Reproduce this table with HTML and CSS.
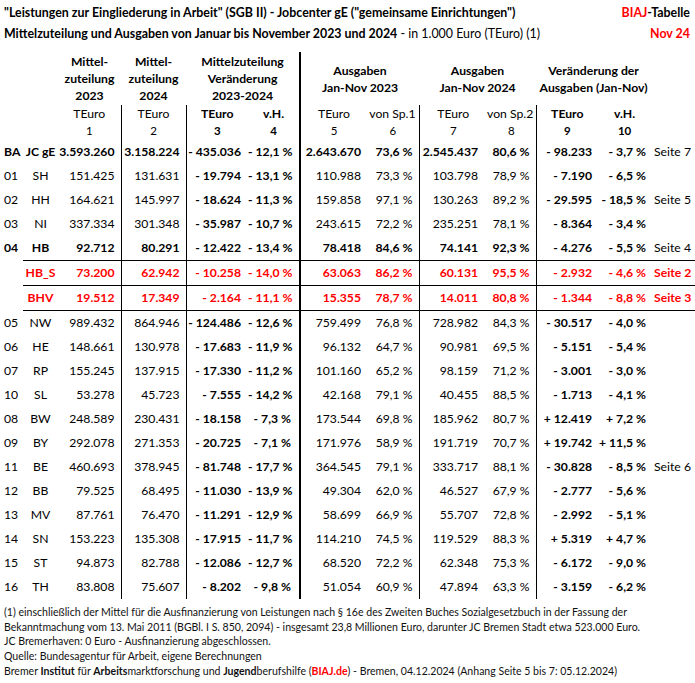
FILE: index.html
```html
<!DOCTYPE html>
<html lang="de">
<head>
<meta charset="utf-8">
<title>BIAJ-Tabelle</title>
<link rel="stylesheet" href="styles.css">
</head>
<body>
<div class="page">
  <div class="titles">
    <div class="tline">
      <span class="b">"Leistungen zur Eingliederung in Arbeit" (SGB II) - Jobcenter gE ("gemeinsame Einrichtungen")</span>
      <span class="b"><span class="red">BIAJ</span>-Tabelle</span>
    </div>
    <div class="tline">
      <span><span class="b">Mittelzuteilung und Ausgaben von Januar bis November 2023 und 2024</span> - in 1.000 Euro (TEuro) (1)</span>
      <span class="b red">Nov 24</span>
    </div>
  </div>

  <table class="tab">
    <colgroup>
      <col class="w-code"><col class="w-name"><col class="w-c1"><col class="w-c2"><col class="w-c3"><col class="w-c4"><col class="w-c5"><col class="w-c6"><col class="w-c7"><col class="w-c8"><col class="w-c9"><col class="w-c10"><col class="w-c11">
    </colgroup>
    <thead>
      <tr class="hgroup">
        <th></th><th></th>
        <th>Mittel-<br>zuteilung<br>2023</th>
        <th>Mittel-<br>zuteilung<br>2024</th>
        <th colspan="2" class="thick">Mittelzuteilung<br>Veränderung<br>2023-2024</th>
        <th colspan="2">Ausgaben<br>Jan-Nov 2023</th>
        <th colspan="2">Ausgaben<br>Jan-Nov 2024</th>
        <th colspan="2">Veränderung der<br>Ausgaben (Jan-Nov)</th>
        <th></th>
      </tr>
      <tr class="hunit">
        <th></th><th></th>
        <th class="n vl">TEuro</th>
        <th class="n vl">TEuro</th>
        <th>TEuro</th>
        <th class="thick">v.H.</th>
        <th class="n">TEuro</th>
        <th class="n vl vr">von Sp.1</th>
        <th class="n">TEuro</th>
        <th class="n vl vr">von Sp.2</th>
        <th>TEuro</th>
        <th>v.H.</th>
        <th></th>
      </tr>
      <tr class="hnum">
        <th></th><th></th>
        <th class="n vl">1</th>
        <th class="n vl">2</th>
        <th>3</th>
        <th class="thick">4</th>
        <th class="n">5</th>
        <th class="n vl">6</th>
        <th class="n">7</th>
        <th class="n vl">8</th>
        <th>9</th>
        <th>10</th>
        <th></th>
      </tr>
    </thead>
    <tbody>
      <tr class="bold"><td class="code">BA</td><td class="name">JC gE</td><td class="vl">3.593.260</td><td class="vl">3.158.224</td><td class="pad3">- 435.036</td><td class="thick">- 12,1 %</td><td>2.643.670</td><td class="vl">73,6 %</td><td class="pad7">2.545.437</td><td class="vl">80,6 %</td><td class="pad9">- 98.233</td><td class="pad10">- 3,7 %</td><td class="seite n">Seite 7</td></tr>
      <tr><td class="code">01</td><td class="name">SH</td><td class="vl">151.425</td><td class="vl">131.631</td><td class="b pad3">- 19.794</td><td class="b thick">- 13,1 %</td><td>110.988</td><td class="vl">73,3 %</td><td class="pad7">103.798</td><td class="vl">78,9 %</td><td class="b pad9">- 7.190</td><td class="b pad10">- 6,5 %</td><td class="seite"></td></tr>
      <tr><td class="code">02</td><td class="name">HH</td><td class="vl">164.621</td><td class="vl">145.997</td><td class="b pad3">- 18.624</td><td class="b thick">- 11,3 %</td><td>159.858</td><td class="vl">97,1 %</td><td class="pad7">130.263</td><td class="vl">89,2 %</td><td class="b pad9">- 29.595</td><td class="b pad10">- 18,5 %</td><td class="seite">Seite 5</td></tr>
      <tr><td class="code">03</td><td class="name">NI</td><td class="vl">337.334</td><td class="vl">301.348</td><td class="b pad3">- 35.987</td><td class="b thick">- 10,7 %</td><td>243.615</td><td class="vl">72,2 %</td><td class="pad7">235.251</td><td class="vl">78,1 %</td><td class="b pad9">- 8.364</td><td class="b pad10">- 3,4 %</td><td class="seite"></td></tr>
      <tr class="bold sep"><td class="code">04</td><td class="name">HB</td><td class="vl">92.712</td><td class="vl">80.291</td><td class="pad3">- 12.422</td><td class="thick">- 13,4 %</td><td>78.418</td><td class="vl">84,6 %</td><td class="pad7">74.141</td><td class="vl">92,3 %</td><td class="pad9">- 4.276</td><td class="pad10">- 5,5 %</td><td class="seite n">Seite 4</td></tr>
      <tr class="bold red sep"><td class="code"></td><td class="name">HB_S</td><td class="vl">73.200</td><td class="vl">62.942</td><td class="pad3">- 10.258</td><td class="thick">- 14,0 %</td><td>63.063</td><td class="vl">86,2 %</td><td class="pad7">60.131</td><td class="vl">95,5 %</td><td class="pad9">- 2.932</td><td class="pad10">- 4,6 %</td><td class="seite">Seite 2</td></tr>
      <tr class="bold red sep"><td class="code"></td><td class="name">BHV</td><td class="vl">19.512</td><td class="vl">17.349</td><td class="pad3">- 2.164</td><td class="thick">- 11,1 %</td><td>15.355</td><td class="vl">78,7 %</td><td class="pad7">14.011</td><td class="vl">80,8 %</td><td class="pad9">- 1.344</td><td class="pad10">- 8,8 %</td><td class="seite">Seite 3</td></tr>
      <tr><td class="code">05</td><td class="name">NW</td><td class="vl">989.432</td><td class="vl">864.946</td><td class="b pad3">- 124.486</td><td class="b thick">- 12,6 %</td><td>759.499</td><td class="vl">76,8 %</td><td class="pad7">728.982</td><td class="vl">84,3 %</td><td class="b pad9">- 30.517</td><td class="b pad10">- 4,0 %</td><td class="seite"></td></tr>
      <tr><td class="code">06</td><td class="name">HE</td><td class="vl">148.661</td><td class="vl">130.978</td><td class="b pad3">- 17.683</td><td class="b thick">- 11,9 %</td><td>96.132</td><td class="vl">64,7 %</td><td class="pad7">90.981</td><td class="vl">69,5 %</td><td class="b pad9">- 5.151</td><td class="b pad10">- 5,4 %</td><td class="seite"></td></tr>
      <tr><td class="code">07</td><td class="name">RP</td><td class="vl">155.245</td><td class="vl">137.915</td><td class="b pad3">- 17.330</td><td class="b thick">- 11,2 %</td><td>101.160</td><td class="vl">65,2 %</td><td class="pad7">98.159</td><td class="vl">71,2 %</td><td class="b pad9">- 3.001</td><td class="b pad10">- 3,0 %</td><td class="seite"></td></tr>
      <tr><td class="code">10</td><td class="name">SL</td><td class="vl">53.278</td><td class="vl">45.723</td><td class="b pad3">- 7.555</td><td class="b thick">- 14,2 %</td><td>42.168</td><td class="vl">79,1 %</td><td class="pad7">40.455</td><td class="vl">88,5 %</td><td class="b pad9">- 1.713</td><td class="b pad10">- 4,1 %</td><td class="seite"></td></tr>
      <tr><td class="code">08</td><td class="name">BW</td><td class="vl">248.589</td><td class="vl">230.431</td><td class="b pad3">- 18.158</td><td class="b thick">- 7,3 %</td><td>173.544</td><td class="vl">69,8 %</td><td class="pad7">185.962</td><td class="vl">80,7 %</td><td class="b pad9">+ 12.419</td><td class="b pad10">+ 7,2 %</td><td class="seite"></td></tr>
      <tr><td class="code">09</td><td class="name">BY</td><td class="vl">292.078</td><td class="vl">271.353</td><td class="b pad3">- 20.725</td><td class="b thick">- 7,1 %</td><td>171.976</td><td class="vl">58,9 %</td><td class="pad7">191.719</td><td class="vl">70,7 %</td><td class="b pad9">+ 19.742</td><td class="b pad10">+ 11,5 %</td><td class="seite"></td></tr>
      <tr><td class="code">11</td><td class="name">BE</td><td class="vl">460.693</td><td class="vl">378.945</td><td class="b pad3">- 81.748</td><td class="b thick">- 17,7 %</td><td>364.545</td><td class="vl">79,1 %</td><td class="pad7">333.717</td><td class="vl">88,1 %</td><td class="b pad9">- 30.828</td><td class="b pad10">- 8,5 %</td><td class="seite">Seite 6</td></tr>
      <tr><td class="code">12</td><td class="name">BB</td><td class="vl">79.525</td><td class="vl">68.495</td><td class="b pad3">- 11.030</td><td class="b thick">- 13,9 %</td><td>49.304</td><td class="vl">62,0 %</td><td class="pad7">46.527</td><td class="vl">67,9 %</td><td class="b pad9">- 2.777</td><td class="b pad10">- 5,6 %</td><td class="seite"></td></tr>
      <tr><td class="code">13</td><td class="name">MV</td><td class="vl">87.761</td><td class="vl">76.470</td><td class="b pad3">- 11.291</td><td class="b thick">- 12,9 %</td><td>58.699</td><td class="vl">66,9 %</td><td class="pad7">55.707</td><td class="vl">72,8 %</td><td class="b pad9">- 2.992</td><td class="b pad10">- 5,1 %</td><td class="seite"></td></tr>
      <tr><td class="code">14</td><td class="name">SN</td><td class="vl">153.223</td><td class="vl">135.308</td><td class="b pad3">- 17.915</td><td class="b thick">- 11,7 %</td><td>114.210</td><td class="vl">74,5 %</td><td class="pad7">119.529</td><td class="vl">88,3 %</td><td class="b pad9">+ 5.319</td><td class="b pad10">+ 4,7 %</td><td class="seite"></td></tr>
      <tr><td class="code">15</td><td class="name">ST</td><td class="vl">94.873</td><td class="vl">82.788</td><td class="b pad3">- 12.086</td><td class="b thick">- 12,7 %</td><td>68.520</td><td class="vl">72,2 %</td><td class="pad7">62.348</td><td class="vl">75,3 %</td><td class="b pad9">- 6.172</td><td class="b pad10">- 9,0 %</td><td class="seite"></td></tr>
      <tr><td class="code">16</td><td class="name">TH</td><td class="vl">83.808</td><td class="vl">75.607</td><td class="b pad3">- 8.202</td><td class="b thick">- 9,8 %</td><td>51.054</td><td class="vl">60,9 %</td><td class="pad7">47.894</td><td class="vl">63,3 %</td><td class="b pad9">- 3.159</td><td class="b pad10">- 6,2 %</td><td class="seite"></td></tr>
    </tbody>
  </table>

  <div class="foot">
    <p class="note">(1) einschließlich der Mittel für die Ausfinanzierung von Leistungen nach § 16e des Zweiten Buches Sozialgesetzbuch in der Fassung der<br>Bekanntmachung vom 13. Mai 2011 (BGBl. I S. 850, 2094) - insgesamt 23,8 Millionen Euro, darunter JC Bremen Stadt etwa 523.000 Euro.<br>JC Bremerhaven: 0 Euro - Ausfinanzierung abgeschlossen.</p>
    <p class="src">Quelle: Bundesagentur für Arbeit, eigene Berechnungen</p>
    <p class="src">Bremer <b>Institut</b> für <b>Arbeits</b>marktforschung und <b>Jugend</b>berufshilfe (<b class="red">BIAJ.de</b>) - Bremen, 04.12.2024 (Anhang Seite 5 bis 7: 05.12.2024)</p>
  </div>
</div>
</body>
</html>
```
FILE: styles.css
```css
html, body {
  margin: 0;
  padding: 0;
  background: #fff;
}
body {
  font-family: Lato, "Open Sans", sans-serif;
  color: #000;
  font-size: 12.4px;
}
.page {
  width: 695px;
}
.b { font-weight: 700; }
.red { color: #ff0000; }

.titles {
  padding: 2px 5px 0 4px;
}
.tline {
  display: flex;
  justify-content: space-between;
  line-height: 21px;
  white-space: nowrap;
}

.tab {
  margin-top: 8px;
  border-collapse: collapse;
  table-layout: fixed;
  width: 695px;
  font-size: 12.2px;
}
.w-code { width: 23px; }
.w-name { width: 35px; }
.w-c1 { width: 63px; }
.w-c2 { width: 65px; }
.w-c3 { width: 62px; }
.w-c4 { width: 52px; }
.w-c5 { width: 67px; }
.w-c6 { width: 52px; }
.w-c7 { width: 68px; }
.w-c8 { width: 49px; }
.w-c9 { width: 62px; }
.w-c10 { width: 53px; }
.w-c11 { width: 44px; }

.tab th {
  padding: 0;
  font-weight: 700;
  text-align: center;
  white-space: nowrap;
}
.tab th.n { font-weight: 400; }
.tab th.vr { text-align: right; padding-right: 3px; }
.hgroup th {
  height: 53px;
  line-height: 17px;
  vertical-align: middle;
}
.hunit th {
  height: 17px;
  line-height: 17px;
}
.hnum th {
  height: 18px;
  line-height: 18px;
  font-size: 11.5px;
}

.tab td {
  height: 24px;
  padding: 0 6px 0 0;
  line-height: 24px;
  text-align: right;
  white-space: nowrap;
}
.tab td.code {
  text-align: left;
  padding: 0 0 0 4px;
}
.tab td.name {
  text-align: center;
  padding: 0;
}
.tab td.pad3 { padding-right: 7px; }
.tab td.thick { padding-right: 8px; }
.tab td.vl { padding-right: 6px; }
.tab td.pad7 { padding-right: 9px; }
.tab td.pad9 { padding-right: 6px; }
.tab td.pad10 { padding-right: 5px; }
.tab td.seite {
  text-align: left;
  padding: 0 0 0 3px;
}
.tab td.seite.n { font-weight: 400; }
.tab tr.red td.seite { font-weight: 700; }

.bold td { font-weight: 700; }

.vl { border-right: 1px solid #000; }
.thick { border-right: 2px solid #000; }
.sep td { border-bottom: 1px solid #000; }
.sep td.code { border-bottom: none; }

.foot {
  padding: 6px 0 0 4px;
  font-size: 10.55px;
  color: #111;
}
.foot p {
  margin: 0;
  white-space: nowrap;
}
.note {
  line-height: 14.5px;
}
.src {
  line-height: 15.5px;
}
```
